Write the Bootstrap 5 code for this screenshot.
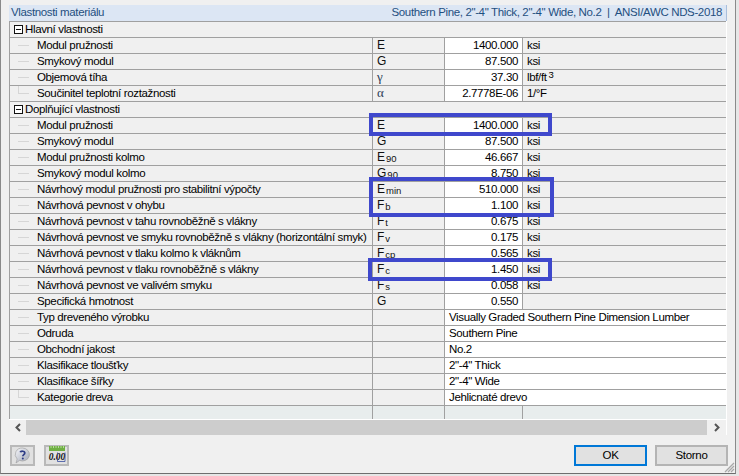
<!DOCTYPE html>
<html lang="cs">
<head>
<meta charset="utf-8">
<link href="https://cdn.jsdelivr.net/npm/bootstrap@5.3.0/dist/css/bootstrap.min.css" rel="stylesheet">
<style>
html,body{height:100%;margin:0;overflow:hidden;background:#e6e6e6}
body{font-family:"Liberation Sans",Arial,sans-serif;font-size:11.500px;letter-spacing:-.36px;color:#000;line-height:15px}
.dlg{width:736px;height:474px;border-left:1px solid #8a8a8a;border-right:1px solid #8a8a8a;border-bottom:1px solid #6e6e6e;padding:5px 8px 0 8px;background:#f0f0f0}
.hdr{height:16px;background:#dce6f4;color:#1f4f80;padding:0 4px 0 2px;line-height:15px;border-right:1px solid #a9bfdc}
.grid-wrap{position:relative;border-right:1px solid #fff}
.ptab{table-layout:fixed;width:100%;border-collapse:collapse;margin:0;border-color:#a0a0a0}
.ptab td{height:16px;padding:0 3px 1px 4px;border:1px solid #a0a0a0;border-width:1px 0 1px 1px;background:#f0f0f0;white-space:nowrap;overflow:hidden;line-height:14px;color:#000;box-shadow:none;vertical-align:middle}
.ptab td.val{background:#fff;text-align:right;padding-right:4px}
.ptab td.txt{background:#fff;text-align:left;padding-left:4px}
.ptab td.nam{padding-left:27px;position:relative}
.ptab td.nam::before{content:"";position:absolute;left:8px;top:7px;width:11px;border-top:1px solid #d6d6d6}
.ptab td.lst::after{content:"";position:absolute;left:8px;top:0;height:8px;border-left:1px solid #d6d6d6}
.ptab td.grp{padding-left:15px;position:relative}
.ptab td.cod{font-size:12px;letter-spacing:0;color:#111}
.ptab td.sym{font-family:"Liberation Serif",serif;font-size:13px;color:#2b3b55}
.ptab tr.endrow td{height:13px;background:#e8eded;border-bottom:0}
.box{position:absolute;left:4px;top:3px;width:9px;height:9px;border:1px solid #111;background:#fff}
.box::after{content:"";position:absolute;left:1px;right:1px;top:3px;border-top:1px solid #111}
.ptab sub{font-size:9.500px;bottom:-1px;position:relative;vertical-align:baseline;line-height:0;margin-left:1px}
.ptab sup{font-size:9.500px;top:-3px;position:relative;vertical-align:baseline;line-height:0;margin-left:2px}
.hl{position:absolute;border:4px solid #3f48cc;pointer-events:none}
.hl1{left:360px;top:92px;width:183px;height:23px}
.hl2{left:360px;top:156px;width:185px;height:40px}
.hl3{left:359px;top:237px;width:184px;height:23px}
.sbar{height:15px;background:#cdcdcd;border-top:1px solid #fff;box-sizing:content-box;display:flex;justify-content:space-between;align-items:stretch}
.arr{width:17px;background:#f0f0f0;display:flex;align-items:center;justify-content:center}
.arr2{width:19px}
.foot{padding:10px 0 0 1px;margin-right:-1px}
.tbtn{width:25px;height:21px;border:2px solid #b9b9b9;background:#e1e1e1;display:flex;align-items:center;justify-content:center;padding:0;border-radius:0}
.tbtn+.tbtn{margin-left:9px}
.wbtn{width:73px;height:21px;border:2px solid #b4b4b4;background:#e1e1e1;color:#000;font-size:11.500px;letter-spacing:-.3px;padding:0;border-radius:0;line-height:15px}
.wbtn.act{border-color:#0078d7}
.grip{position:absolute;right:0;bottom:0}
</style>
</head>
<body>
<div class="dlg position-relative">
  <div class="hdr d-flex justify-content-between"><span>Vlastnosti materiálu</span><span>Southern Pine, 2"-4" Thick, 2"-4" Wide, No.2 &nbsp;|&nbsp; ANSI/AWC NDS-2018</span></div>
  <div class="grid-wrap">
    <table class="ptab">
      <colgroup><col style="width:363px"><col style="width:72px"><col style="width:78px"><col></colgroup>
      <tbody>
        <tr><td class="grp" colspan="4"><i class="box"></i>Hlavní vlastnosti</td></tr>
        <tr><td class="nam">Modul pružnosti</td><td class="cod">E</td><td class="val">1400.000</td><td>ksi</td></tr>
        <tr><td class="nam">Smykový modul</td><td class="cod">G</td><td class="val">87.500</td><td>ksi</td></tr>
        <tr><td class="nam">Objemová tíha</td><td class="cod sym">γ</td><td class="val">37.30</td><td>lbf/ft<sup>3</sup></td></tr>
        <tr><td class="nam lst">Součinitel teplotní roztažnosti</td><td class="cod sym">α</td><td class="val">2.7778E-06</td><td>1/°F</td></tr>
        <tr><td class="grp" colspan="4"><i class="box"></i>Doplňující vlastnosti</td></tr>
        <tr><td class="nam">Modul pružnosti</td><td class="cod">E</td><td class="val">1400.000</td><td>ksi</td></tr>
        <tr><td class="nam">Smykový modul</td><td class="cod">G</td><td class="val">87.500</td><td>ksi</td></tr>
        <tr><td class="nam">Modul pružnosti kolmo</td><td class="cod">E<sub>90</sub></td><td class="val">46.667</td><td>ksi</td></tr>
        <tr><td class="nam">Smykový modul kolmo</td><td class="cod">G<sub>90</sub></td><td class="val">8.750</td><td>ksi</td></tr>
        <tr><td class="nam">Návrhový modul pružnosti pro stabilitní výpočty</td><td class="cod">E<sub>min</sub></td><td class="val">510.000</td><td>ksi</td></tr>
        <tr><td class="nam">Návrhová pevnost v ohybu</td><td class="cod">F<sub>b</sub></td><td class="val">1.100</td><td>ksi</td></tr>
        <tr><td class="nam">Návrhová pevnost v tahu rovnoběžně s vlákny</td><td class="cod">F<sub>t</sub></td><td class="val">0.675</td><td>ksi</td></tr>
        <tr><td class="nam">Návrhová pevnost ve smyku rovnoběžně s vlákny (horizontální smyk)</td><td class="cod">F<sub>v</sub></td><td class="val">0.175</td><td>ksi</td></tr>
        <tr><td class="nam">Návrhová pevnost v tlaku kolmo k vláknům</td><td class="cod">F<sub>cp</sub></td><td class="val">0.565</td><td>ksi</td></tr>
        <tr><td class="nam">Návrhová pevnost v tlaku rovnoběžně s vlákny</td><td class="cod">F<sub>c</sub></td><td class="val">1.450</td><td>ksi</td></tr>
        <tr><td class="nam">Návrhová pevnost ve valivém smyku</td><td class="cod">F<sub>s</sub></td><td class="val">0.058</td><td>ksi</td></tr>
        <tr><td class="nam">Specifická hmotnost</td><td class="cod">G</td><td class="val">0.550</td><td></td></tr>
        <tr><td class="nam">Typ dreveného výrobku</td><td></td><td class="txt" colspan="2">Visually Graded Southern Pine Dimension Lumber</td></tr>
        <tr><td class="nam">Odruda</td><td></td><td class="txt" colspan="2">Southern Pine</td></tr>
        <tr><td class="nam">Obchodní jakost</td><td></td><td class="txt" colspan="2">No.2</td></tr>
        <tr><td class="nam">Klasifikace tloušťky</td><td></td><td class="txt" colspan="2">2"-4" Thick</td></tr>
        <tr><td class="nam">Klasifikace šířky</td><td></td><td class="txt" colspan="2">2"-4" Wide</td></tr>
        <tr><td class="nam lst">Kategorie dreva</td><td></td><td class="txt" colspan="2">Jehlicnaté drevo</td></tr>
        <tr class="endrow"><td></td><td></td><td></td><td></td></tr>
      </tbody>
    </table>
    <div class="sbar">
      <div class="arr"><svg width="8" height="9" viewBox="0 0 8 9"><path d="M6 1 2.500 4.500 6 8" fill="none" stroke="#555" stroke-width="2"/></svg></div>
      <div class="arr arr2"><svg width="8" height="9" viewBox="0 0 8 9"><path d="M2 1 5.500 4.500 2 8" fill="none" stroke="#555" stroke-width="2"/></svg></div>
    </div>
    <div class="hl hl1"></div><div class="hl hl2"></div><div class="hl hl3"></div>
  </div>
  <div class="foot d-flex align-items-start">
    <button class="tbtn" type="button" aria-label="Nápověda"><svg width="17" height="17" viewBox="0 0 17 17"><defs><linearGradient id="hb" x1="0" y1="0" x2="1" y2="1"><stop offset="0" stop-color="#f6f7fa"/><stop offset="1" stop-color="#9da3b3"/></linearGradient></defs><path d="M8.500 1a7 6.500 0 1 1-3 12.400L2 16l1.200-4A7 6.500 0 0 1 8.500 1Z" fill="url(#hb)" stroke="#9a9a9a" stroke-width=".6"/><path d="M6.200 5.300C6.600 3.900 10.800 3.600 10.800 6 10.800 7.600 8.800 7.700 8.800 9.300" fill="none" stroke="#2d3b86" stroke-width="1.700"/><circle cx="8.800" cy="11.600" r="1" fill="#2d3b86"/></svg></button>
    <button class="tbtn" type="button" aria-label="Desetinná místa"><svg width="18" height="18" viewBox="0 0 18 18"><rect x="1" y="0" width="16" height="5" fill="#6fb043"/><path d="M3 0v2M5.500 0v2M8 0v2M10.500 0v2M13 0v2M15.500 0v2" stroke="#d6ecc4" stroke-width=".7"/><text x="9" y="13.500" text-anchor="middle" font-family="Liberation Serif" font-style="italic" font-weight="700" font-size="9.500" letter-spacing="0" fill="#111">0.00</text><path d="M9.500 15.500h7.500M9.500 6.500v9M17 6.500v9" stroke="#3a4fa0" stroke-width=".8" fill="none"/></svg></button>
    <button class="wbtn act ms-auto me-2" type="button">OK</button>
    <button class="wbtn" type="button">Storno</button>
  </div>
  <svg class="grip" width="11" height="11" viewBox="0 0 11 11"><path d="M10 1 1 10M10 4 4 10M10 7 7 10" stroke="#a8a8a8" stroke-width="1.300"/></svg>
</div>
<script src="https://cdn.jsdelivr.net/npm/bootstrap@5.3.0/dist/js/bootstrap.bundle.min.js"></script>
</body>
</html>
